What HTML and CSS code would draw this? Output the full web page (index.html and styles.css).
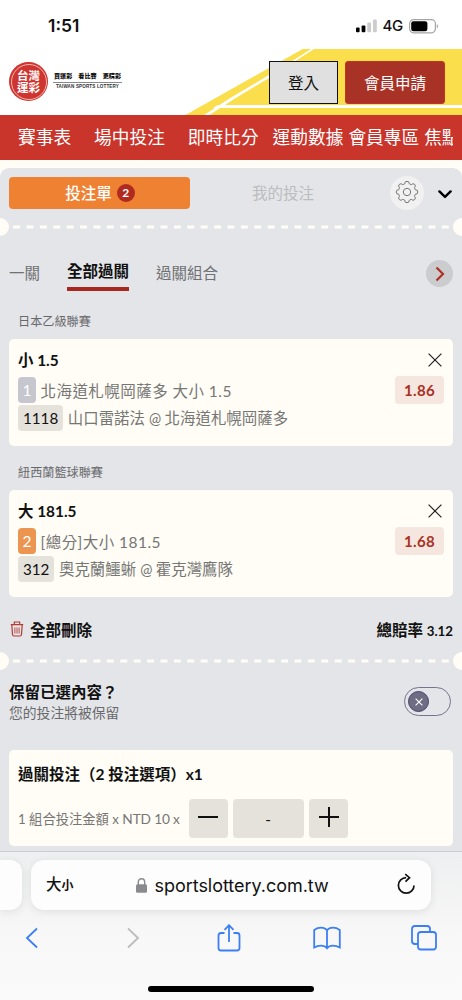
FILE: index.html
```html
<!DOCTYPE html>
<html lang="zh-Hant">
<head>
<meta charset="utf-8">
<meta name="viewport" content="width=device-width, initial-scale=1">
<title>台灣運彩</title>
<link rel="stylesheet" href="styles.css">
</head>
<body>
<div class="screen">
  <div class="status">
    <span class="clock">1:51</span>
    <div class="signals">
      <svg width="21" height="14" viewBox="0 0 21 14"><rect x="0" y="8.5" width="3.6" height="4.8" rx="1"/><rect x="5.6" y="6.6" width="3.8" height="6.7" rx="1"/><rect class="dim" x="11.3" y="3.5" width="3.8" height="9.8" rx="1"/><rect class="dim" x="17" y="0.5" width="3.8" height="12.8" rx="1"/></svg>
      <span class="network">4G</span>
      <svg width="30" height="15" viewBox="0 0 30 15"><rect class="shell" x="0.6" y="0.7" width="25.8" height="13.1" rx="4"/><rect x="2.2" y="2.3" width="16.2" height="9.9" rx="2.3"/><path class="cap" d="M27.8 5v4.6q1.3-.8 1.3-2.3T27.8 5z"/></svg>
    </div>
  </div>

  <header class="header">
    <svg class="stripes" width="462" height="66" viewBox="0 0 462 66"><path class="gold" d="M185.500 66L302.700 0H462V66z"/><path class="line" d="M204 66L231 48.500L269 26L293 11.500L311 0H314L269 29L231 52L209.500 66z"/><path class="line" d="M213 59L218 56H462V59z"/></svg>
    <div class="brand">
      <div class="seal"><div class="seal-ring">台灣<br>運彩</div></div>
      <div class="slogan">
        <div class="slogan-zh"><span>買運彩</span><span>看比賽</span><span>更精彩</span></div>
        <div class="slogan-en">TAIWAN SPORTS LOTTERY</div>
      </div>
    </div>
    <div class="account">
      <button class="login">登入</button>
      <button class="apply">會員申請</button>
    </div>
  </header>

  <nav class="nav"><a class="n1">賽事表</a><a class="n2">場中投注</a><a class="n3">即時比分</a><a class="n4">運動數據</a><a class="n5">會員專區</a><a class="n6">焦點</a></nav>

  <main class="slip">
    <div class="tabs">
      <div class="tab-active">投注單<span class="count">2</span></div>
      <div class="tab">我的投注</div>
      <div class="gear"><svg width="26" height="26" viewBox="-13 -13 26 26"><path d="M-2.200 -8.300Q-2.500 -10.700 0 -10.700Q2.500 -10.700 2.200 -8.300Q3 -7.700 4.300 -7.400Q6 -9.100 7.700 -7.600Q9.300 -5.900 7.500 -4.300Q7.800 -3.100 8.300 -2.200Q10.800 -2.400 10.800 0Q10.800 2.400 8.300 2.200Q7.800 3.100 7.500 4.300Q9.300 5.900 7.700 7.600Q6 9.100 4.300 7.400Q3 7.700 2.200 8.300Q2.500 10.700 0 10.700Q-2.500 10.700 -2.200 8.300Q-3 7.700 -4.300 7.400Q-6 9.100 -7.700 7.600Q-9.300 5.900 -7.500 4.300Q-7.800 3.100 -8.300 2.200Q-10.800 2.400 -10.800 0Q-10.800 -2.400 -8.300 -2.200Q-7.800 -3.100 -7.500 -4.300Q-9.300 -5.900 -7.700 -7.600Q-6 -9.100 -4.300 -7.400Q-3 -7.700 -2.200 -8.300z"/><circle r="3.700"/></svg></div>
      <svg class="fold" width="14" height="9" viewBox="0 0 14 9"><path d="M1.400 1.400L7 6.900L12.600 1.400"/></svg>
    </div>
    <div class="tear"><i></i><svg width="444" height="4"><path d="M4.100 2H444"/></svg><i></i></div>

    <div class="modes">
      <span class="mode m1">一關</span><span class="mode chosen">全部過關</span><span class="mode">過關組合</span>
      <div class="next"><svg width="10" height="16" viewBox="0 0 10 16"><path d="M1.500 1.500L8 8L1.500 14.500"/></svg></div>
    </div>

    <div class="league first">日本乙級聯賽</div>
    <section class="card">
      <div class="pick"><b>小 1.5</b><svg class="close" width="14" height="14" viewBox="0 0 14 14"><path d="M.6 .6L13.400 13.400M13.400 .6L.6 13.400"/></svg></div>
      <div class="market"><span class="chip grey">1</span><span class="market-name">北海道札幌岡薩多 大小 1.5</span><span class="odds">1.86</span></div>
      <div class="match"><span class="chip code">1118</span><span class="teams">山口雷諾法<em>@</em>北海道札幌岡薩多</span></div>
    </section>

    <div class="league">紐西蘭籃球聯賽</div>
    <section class="card">
      <div class="pick"><b>大 181.5</b><svg class="close" width="14" height="14" viewBox="0 0 14 14"><path d="M.6 .6L13.400 13.400M13.400 .6L.6 13.400"/></svg></div>
      <div class="market"><span class="chip orange">2</span><span class="market-name">[總分]大小 181.5</span><span class="odds">1.68</span></div>
      <div class="match"><span class="chip code">312</span><span class="teams">奧克蘭鱷蜥<em>@</em>霍克灣鷹隊</span></div>
    </section>

    <div class="summary">
      <div class="clear"><svg width="14" height="16" viewBox="0 0 14 16"><path d="M.8 3.600H13.200M4.300 3.400V1H9.700V3.400M1.800 3.800L2.500 13.500Q2.600 15 4 15H10Q11.400 15 11.500 13.500L12.200 3.800"/><path class="ribs" d="M4.900 6.500V12.500M7 6.500V12.500M9.100 6.500V12.500"/></svg>全部刪除</div>
      <div class="total">總賠率 <span>3.12</span></div>
    </div>
    <div class="tear"><i></i><svg width="444" height="4"><path d="M4.100 2H444"/></svg><i></i></div>

    <div class="keep">
      <div><div class="keep-title">保留已選內容？</div><div class="keep-note">您的投注將被保留</div></div>
      <div class="toggle"><div class="knob"><svg width="8" height="8" viewBox="0 0 8 8"><path d="M.6 .6L7.400 7.400M7.400 .6L.6 7.400"/></svg></div></div>
    </div>

    <section class="card stake">
      <div class="stake-title">過關投注（2 投注選項）x1</div>
      <div class="stake-row">
        <span class="unit">1 組合投注金額 x <span>NTD 10 x</span></span>
        <div class="step"><svg width="20" height="20" viewBox="0 0 20 20"><path d="M0 10H20"/></svg></div>
        <div class="amount">-</div>
        <div class="step"><svg width="20" height="20" viewBox="0 0 20 20"><path d="M0 10H20M10 0V20"/></svg></div>
      </div>
    </section>
  </main>

  <footer class="browser">
    <div class="address-row">
      <div class="previous"></div>
      <div class="address">
        <span class="text-size">大<small>小</small></span>
        <div class="site"><svg width="11" height="15" viewBox="0 0 11 15"><path class="shackle" d="M2.300 7V4.300Q2.300 .8 5.500 .8T8.700 4.300V7"/><rect y="6.300" width="11" height="8.500" rx="1.500"/></svg>sportslottery.com.tw</div>
        <svg class="reload" width="19" height="22" viewBox="0 0 19 22"><path d="M9.200 4.600A7.800 7.800 0 1 0 17 12.400M8.200 1.200L12.500 4.700L8.500 8.600"/></svg>
      </div>
      <div class="following"></div>
    </div>
    <div class="toolbar">
      <svg width="14" height="22" viewBox="0 0 14 22"><path d="M12 1.500L2 11L12 20.500"/></svg>
      <svg class="off" width="14" height="22" viewBox="0 0 14 22"><path d="M2 1.500L12 11L2 20.500"/></svg>
      <svg width="24" height="28" viewBox="0 0 24 28"><path d="M7.500 9H4Q1.500 9 1.500 11.500V24Q1.500 26.500 4 26.500H20Q22.500 26.500 22.500 24V11.500Q22.500 9 20 9H16.500M12 18V1.500M7.500 5.800L12 1.200L16.500 5.800"/></svg>
      <svg width="28" height="24" viewBox="0 0 28 24"><path d="M14 4.300Q12 1.700 8 1.700Q4.500 1.700 1.200 3.900V21.500Q4.500 19.700 8 19.700Q12 19.700 14 22.300Q16 19.700 20 19.700Q23.500 19.700 26.800 21.500V3.900Q23.500 1.700 20 1.700Q16 1.700 14 4.300zV22"/></svg>
      <svg width="26" height="26" viewBox="0 0 26 26"><path d="M7 19H4Q1 19 1 16V4Q1 1 4 1H16Q19 1 19 4V7"/><rect x="7" y="7" width="18" height="17.500" rx="2.800"/></svg>
    </div>
    <div class="home"></div>
  </footer>
</div>
</body>
</html>
```

FILE: styles.css
```css
* { box-sizing: border-box; }
body { margin: 0; background: #fff; }
svg { display: block; flex: none; }
button { margin: 0; padding: 0; font: inherit; }
.screen { width: 462px; height: 1000px; overflow: hidden; display: flex; flex-direction: column; background: #fffdf6; font-family: Lato, "Noto Sans CJK TC", sans-serif; font-size: 15.5px; line-height: 20px; color: #111; white-space: nowrap; }

.status { flex: none; height: 49px; background: #fff; display: flex; justify-content: space-between; padding: 16px 23px 0 48px; font-family: Inter, sans-serif; }
.clock { font-size: 17.5px; font-weight: 600; }
.signals { display: flex; align-items: center; height: 20px; gap: 6px; }
.network { font-size: 15px; font-weight: 500; letter-spacing: -.3px; }
.dim { fill: #ccc; }
.shell { fill: none; stroke: #a5a5a5; stroke-width: 1.2; }
.cap { fill: #a5a5a5; }

.header { flex: none; height: 66px; position: relative; background: #fff; display: flex; justify-content: space-between; padding: 12px 17px 0 9px; }
.stripes { position: absolute; left: 0; top: 0; }
.gold { fill: #fade4b; }
.line { fill: #fff; }
.brand, .account { position: relative; display: flex; }
.seal { width: 39px; height: 39px; margin-top: 1px; padding: 1.5px; border-radius: 50%; background: #cf3530; }
.seal-ring { width: 36px; height: 36px; border: 1px solid #f2b8ae; border-radius: 50%; color: #fff; font-size: 11.5px; font-weight: 700; line-height: 12px; text-align: center; padding-top: 5px; }
.slogan { width: 69px; margin: 10px 0 0 5px; }
.slogan-zh { height: 11.500px; border-bottom: 1px solid #888; display: flex; justify-content: space-between; padding: 0 1px; font-size: 6.1px; line-height: 9px; font-weight: 900; }
.slogan-en { font-family: "Liberation Sans", sans-serif; font-size: 4.6px; font-weight: 700; line-height: 8px; text-align: center; letter-spacing: .12px; color: #333; }
.account { gap: 7px; }
.login, .apply { height: 43px; font-size: 15.5px; }
.login { width: 69px; background: #e0e0e0; border: 1px solid #111; color: #111; }
.apply { width: 100px; background: #a93226; border: 1px solid #c33427; border-radius: 3px; color: #fff; }

.nav { flex: none; height: 44.500px; background: #c9342b; color: #fff; display: flex; padding-left: 18px; font-size: 17.7px; line-height: 46px; }
.n1, .n2 { margin-right: 23px; }
.n3 { margin-right: 14px; }
.n4, .n5 { margin-right: 5px; }
.n6 { width: 29px; overflow: hidden; }

.slip { flex: none; height: 683px; margin-top: 8.500px; background: #e4e5e8; border-radius: 9px 9px 0 0; overflow: hidden; }
.tabs { height: 50px; display: flex; padding: 9px 10px 0 9px; }
.tab-active { width: 181px; height: 32px; background: #ef8132; border-radius: 4px; color: #fff; display: flex; align-items: center; justify-content: center; gap: 5px; font-weight: 500; padding-left: 1px; }
.count { width: 18px; height: 18px; border-radius: 50%; background: #b02a20; font-size: 12px; font-weight: 700; line-height: 18px; text-align: center; }
.tab { width: 186px; line-height: 32px; text-align: center; color: #bbbcbe; }
.gear { width: 34px; height: 34px; margin: -1px 14px 0 14px; border-radius: 50%; background: #f1f1f1; display: flex; align-items: center; justify-content: center; padding-bottom: 2px; }
.gear svg { fill: none; stroke: #777; stroke-width: 1; }
.fold { margin-top: 13px; fill: none; stroke: #000; stroke-width: 2.4; stroke-linecap: round; stroke-linejoin: round; }
.tear { height: 18px; display: flex; align-items: center; margin: 0 -9px; }
.tear i { width: 18px; height: 18px; border-radius: 50%; background: #fffdf6; flex: none; }
.tear path { stroke: #fffdf6; stroke-width: 3; stroke-dasharray: 6.900 6.500; }

.modes { height: 72px; display: flex; padding: 26px 9px 0; color: #707174; line-height: 22px; }
.mode { height: 28.500px; margin-right: 27px; }
.chosen { color: #111; font-weight: 700; border-bottom: 4px solid #a8281f; line-height: 18px; }
.next { width: 27px; height: 27px; margin: -2px 0 0 auto; border-radius: 50%; background: #cbccce; display: flex; align-items: center; justify-content: center; }
.next path { fill: none; stroke: #b03024; stroke-width: 2.2; }

.league { height: 44.500px; padding: 17px 18px 0; font-size: 12.15px; color: #68696c; }
.league.first { height: 31px; padding-top: 4px; }
.card { height: 106.500px; margin: 0 9px; padding: 10px 9px 0; border-radius: 5px; background: #fffdf6; }
.pick { display: flex; justify-content: space-between; align-items: center; height: 22px; font-size: 15.4px; }
.close { margin-right: 2.500px; fill: none; stroke: #222; stroke-width: 1.200; }
.market { display: flex; align-items: center; height: 28px; margin-top: 5px; color: #767674; letter-spacing: .45px; }
.market-name, .teams { padding-top: 1px; }
.match { display: flex; align-items: center; height: 28px; color: #767674; font-size: 15.45px; }
.match em { font-style: normal; font-size: 14.5px; margin: 0 3.500px 0 4px; }
.chip { height: 26px; line-height: 27px; border-radius: 4px; padding: 0 5px; text-align: center; margin-right: 4.500px; flex: none; letter-spacing: 0; }
.grey, .orange { width: 18px; padding: 0; color: #fff; }
.grey { background: #c6c6ce; }
.orange { background: #eb9550; }
.code { background: #e5e2dc; color: #111; font-size: 15.200px; }
.odds { width: 49px; height: 28px; line-height: 29px; margin-left: auto; border-radius: 4px; background: #f5e7df; color: #aa3024; font-weight: 700; text-align: center; font-size: 15px; letter-spacing: .3px; }

.summary { height: 55.500px; display: flex; justify-content: space-between; padding: 23px 9px 0 10px; font-weight: 700; font-size: 15.5px; }
.clear { display: flex; gap: 6px; }
.clear svg { margin-top: 1px; fill: none; stroke: #b63a32; stroke-width: 1.200; }
.clear .ribs { stroke-width: .9; }
.total span { font-size: 13.3px; }

.keep { height: 79.500px; display: flex; justify-content: space-between; padding: 12px 11px 0 9px; }
.keep-title { font-weight: 700; font-size: 15.500px; }
.keep-note { font-size: 13.800px; color: #68696c; line-height: 22px; }
.toggle { width: 47px; height: 29px; margin-top: 5px; border: 1px solid #77738f; border-radius: 15px; padding: 3px; }
.knob { width: 21px; height: 21px; border-radius: 50%; background: #6e6d84; border: 1px solid #46436a; display: flex; align-items: center; justify-content: center; }
.knob path { stroke: #fff; stroke-width: 1.100; }

.stake { height: 96.500px; padding-top: 13px; }
.stake-title { font-weight: 700; font-size: 15.500px; line-height: 22px; }
.stake-row { display: flex; margin-top: 14px; height: 39px; }
.unit { width: 170.500px; font-size: 13.300px; line-height: 40px; color: #767674; }
.unit > span { font-size: 13.700px; letter-spacing: -.15px; }
.step, .amount { height: 39px; border-radius: 4px; background: #e5e2dc; }
.step { width: 39px; display: flex; justify-content: center; padding-top: 8px; }
.step path { stroke: #111; stroke-width: 2; }
.amount { width: 71.500px; margin: 0 5px; text-align: center; line-height: 40px; }

.browser { flex: none; height: 149px; background: linear-gradient(#eeeff0, #f8f8f8 60%, #fafafa); border-top: 1px solid #cdcdd0; }
.address-row { height: 58px; display: flex; gap: 9px; padding-top: 8px; }
.previous { width: 22px; border-radius: 0 12px 12px 0; }
.following { width: 22px; }
.previous, .address { height: 50px; background: #fdfdfd; box-shadow: 0 2px 10px rgba(0,0,0,.09); }
.address { width: 400px; border-radius: 13px; display: flex; align-items: center; padding: 0 15px; font-family: Inter, "Noto Sans CJK TC", sans-serif; }
.text-size { width: 90px; font-size: 15.500px; font-weight: 500; }
.text-size small { font-size: 12px; font-weight: 700; }
.site { display: flex; align-items: center; gap: 7.500px; font-size: 18px; letter-spacing: -.04px; padding-top: 2px; }
.site svg { fill: #8a8a8e; margin-top: -2px; }
.site .shackle { fill: none; stroke: #8a8a8e; stroke-width: 1.400; }
.reload { margin: -3px 0 0 auto; fill: none; stroke: #111; stroke-width: 1.700; }
.toolbar { height: 56px; display: grid; grid-template-columns: 64px 137px 55px 141px 54px; justify-content: start; align-items: center; justify-items: center; }
.toolbar svg { fill: none; stroke: #3c7ff5; stroke-width: 1.800; }
.toolbar svg.off { stroke: #bcbcbe; }
.home { width: 166px; height: 6px; margin: 20px 0 0 148px; border-radius: 3px; background: #000; }
```
